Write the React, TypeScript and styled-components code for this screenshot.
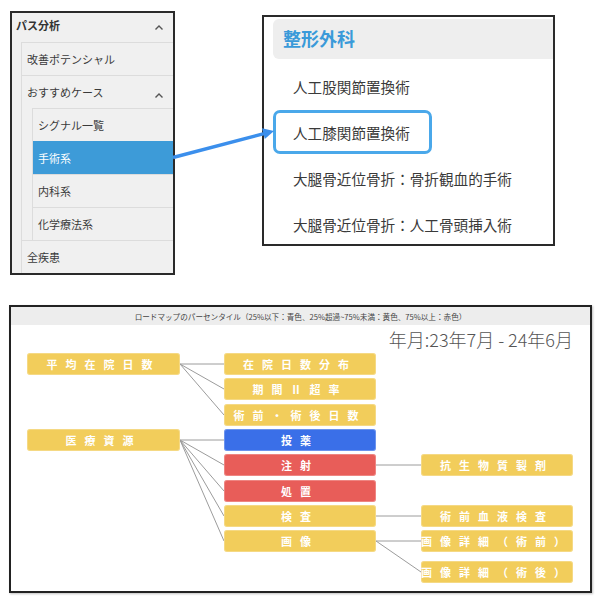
import React from "react";
import styled, { createGlobalStyle } from "styled-components";

const GlobalStyle = createGlobalStyle`
  html, body { margin: 0; padding: 0; background: #ffffff; }
  body { font-family: "Noto Sans CJK JP", "Noto Sans", sans-serif; }
  * { box-sizing: border-box; }
`;

const Page = styled.div`
  width: 607px;
  height: 600px;
  background: #ffffff;
  overflow: hidden;
`;

const TopRow = styled.div`
  position: relative;
  display: flex;
  align-items: flex-start;
  height: 305px;
`;

/* ---------- left side menu ---------- */
const Side = styled.div`
  margin: 11px 0 0 10px;
  width: 165px;
  height: 264px;
  border: 2px solid #2a2a2a;
  background: #f0f0f0;
  overflow: hidden;
  color: #3a3a3a;
  font-size: 11px;
`;

const SideHeader = styled.div`
  height: 29px;
  display: flex;
  align-items: center;
  justify-content: space-between;
  padding: 0 9px 0 4px;
  font-weight: 700;
  color: #333;
  span { margin-top: -5px; }
`;

const Branch = styled.div<{ $indent: number }>`
  margin-left: ${(p) => p.$indent}px;
  border-left: 1px solid #dcdcdc;
`;

const Item = styled.div<{ $active?: boolean }>`
  height: 33px;
  display: flex;
  align-items: center;
  justify-content: space-between;
  padding: 0 9px 0 5px;
  border-top: 1px solid ${(p) => (p.$active ? "#3d9bd8" : "#dcdcdc")};
  background: ${(p) => (p.$active ? "#3d9bd8" : "transparent")};
  color: ${(p) => (p.$active ? "#ffffff" : "#3a3a3a")};
  span { margin-top: -1px; }
`;

const Caret = styled.svg<{ $drop?: number }>`
  width: 10px;
  height: 7px;
  margin-top: ${(p) => p.$drop ?? 0}px;
`;

const Chevron = ({ drop }: { drop?: number }) => (
  <Caret $drop={drop} viewBox="0 0 10 7">
    <path d="M1.5 5.5 L5 2 L8.5 5.5" fill="none" stroke="#555" strokeWidth="1.4" />
  </Caret>
);

/* ---------- right department panel ---------- */
const Dept = styled.div`
  margin: 15px 0 0 87px;
  width: 293px;
  height: 231px;
  border: 2px solid #2a2a2a;
  background: #ffffff;
  overflow: hidden;
`;

const DeptHeader = styled.div`
  margin: 2px 0 0 9px;
  height: 40px;
  border-radius: 6px 0 0 6px;
  background: #eeeeee;
  display: flex;
  align-items: center;
  padding: 0 0 3px 10px;
  font-size: 18px;
  font-weight: 700;
  color: #3a9ad9;
`;

const DeptList = styled.div`
  display: flex;
  flex-direction: column;
  align-items: flex-start;
  gap: 2px;
  margin-top: 5px;
`;

const DeptItem = styled.div<{ $selected?: boolean }>`
  height: 44px;
  margin-left: 9px;
  display: inline-flex;
  align-items: center;
  padding: 0 19px 0 17px;
  border: 3px solid ${(p) => (p.$selected ? "#4aa8ea" : "transparent")};
  border-radius: 7px;
  font-size: 14.6px;
  color: #3a3a3a;
  white-space: nowrap;
`;

const ArrowLayer = styled.svg`
  position: absolute;
  left: 0;
  top: 0;
  width: 607px;
  height: 305px;
  pointer-events: none;
`;

/* ---------- roadmap panel ---------- */
const Roadmap = styled.div`
  margin-left: 9px;
  width: 583px;
  height: 288px;
  border: 2px solid #222;
  background: #ffffff;
  box-shadow: 1px 1px 2px rgba(0, 0, 0, 0.25);
  overflow: hidden;
`;

const Legend = styled.div`
  height: 18px;
  background: #ededed;
  display: flex;
  align-items: center;
  justify-content: center;
  font-size: 7.6px;
  color: #444;
  white-space: nowrap;
`;

const Period = styled.div`
  height: 28px;
  line-height: 28px;
  text-align: right;
  padding-right: 17px;
  font-size: 18px;
  font-weight: 300;
  color: #555;
`;

const Canvas = styled.div`
  position: relative;
  height: 238px;
`;

const Wires = styled.svg`
  position: absolute;
  left: 0;
  top: 0;
  width: 579px;
  height: 238px;
`;

const tone = {
  yellow: "#f2cd5b",
  blue: "#3a6fe8",
  red: "#e85d59",
};

const Node = styled.div<{ $tone: keyof typeof tone }>`
  position: absolute;
  width: 152px;
  height: 22px;
  border-radius: 3px;
  background: ${(p) => tone[p.$tone]};
  box-shadow: inset 0 0 0 1px rgba(255, 255, 255, 0.25);
  color: #ffffff;
  font-size: 11px;
  font-weight: 700;
  letter-spacing: 8px;
  line-height: 22px;
  text-align: center;
  white-space: nowrap;
`;

type N = { label: string; x: number; y: number; w?: number; t: keyof typeof tone };

const LX = 16;
const MX = 213;
const RX = 410;

const nodes: N[] = [
  { label: "平均在院日数", x: LX, y: 0, w: 153, t: "yellow" },
  { label: "医療資源", x: LX, y: 76, w: 153, t: "yellow" },
  { label: "在院日数分布", x: MX, y: 0, t: "yellow" },
  { label: "期間Ⅱ超率", x: MX, y: 25, t: "yellow" },
  { label: "術前・術後日数", x: MX, y: 51, t: "yellow" },
  { label: "投薬", x: MX, y: 76, t: "blue" },
  { label: "注射", x: MX, y: 101, t: "red" },
  { label: "処置", x: MX, y: 127, t: "red" },
  { label: "検査", x: MX, y: 152, t: "yellow" },
  { label: "画像", x: MX, y: 177, t: "yellow" },
  { label: "抗生物質製剤", x: RX, y: 101, t: "yellow" },
  { label: "術前血液検査", x: RX, y: 152, t: "yellow" },
  { label: "画像詳細（術前）", x: RX, y: 177, t: "yellow" },
  { label: "画像詳細（術後）", x: RX, y: 208, t: "yellow" },
];

const links: [number, number, number, number][] = [
  [169, 11, MX, 11],
  [169, 11, MX, 36],
  [169, 11, MX, 62],
  [169, 87, MX, 87],
  [169, 87, MX, 112],
  [169, 87, MX, 138],
  [169, 87, MX, 163],
  [169, 87, MX, 188],
  [MX + 152, 112, RX, 112],
  [MX + 152, 163, RX, 163],
  [MX + 152, 188, RX, 188],
  [MX + 152, 188, RX, 219],
];

export default function App() {
  return (
    <Page>
      <GlobalStyle />
      <TopRow>
        <Side>
          <SideHeader>
            <span>パス分析</span>
            <Chevron />
          </SideHeader>
          <Branch $indent={9}>
            <Item><span>改善ポテンシャル</span></Item>
            <Item>
              <span>おすすめケース</span>
              <Chevron drop={6} />
            </Item>
            <Branch $indent={10}>
              <Item><span>シグナル一覧</span></Item>
              <Item $active><span>手術系</span></Item>
              <Item><span>内科系</span></Item>
              <Item><span>化学療法系</span></Item>
            </Branch>
            <Item><span>全疾患</span></Item>
          </Branch>
        </Side>

        <Dept>
          <DeptHeader>整形外科</DeptHeader>
          <DeptList>
            <DeptItem>人工股関節置換術</DeptItem>
            <DeptItem $selected>人工膝関節置換術</DeptItem>
            <DeptItem>大腿骨近位骨折：骨折観血的手術</DeptItem>
            <DeptItem>大腿骨近位骨折：人工骨頭挿入術</DeptItem>
          </DeptList>
        </Dept>

        <ArrowLayer viewBox="0 0 607 305">
          <line x1="173" y1="157.5" x2="264" y2="133.6" stroke="#3b8fec" strokeWidth="3.4" />
          <polygon points="274,131 264.8,139 262,128.2" fill="#3b8fec" />
        </ArrowLayer>
      </TopRow>

      <Roadmap>
        <Legend>
          ロードマップのパーセンタイル（25%以下：青色、25%超過~75%未満：黄色、75%以上：赤色）
        </Legend>
        <Period>年月:23年7月 - 24年6月</Period>
        <Canvas>
          <Wires viewBox="0 0 579 238">
            {links.map(([x1, y1, x2, y2], i) => (
              <line key={i} x1={x1} y1={y1} x2={x2} y2={y2} stroke="#9c9c9c" strokeWidth="1" />
            ))}
          </Wires>
          {nodes.map((n) => (
            <Node
              key={n.label}
              $tone={n.t}
              style={{ left: n.x, top: n.y, width: n.w ?? 152 }}
            >
              {n.label}
            </Node>
          ))}
        </Canvas>
      </Roadmap>
    </Page>
  );
}
